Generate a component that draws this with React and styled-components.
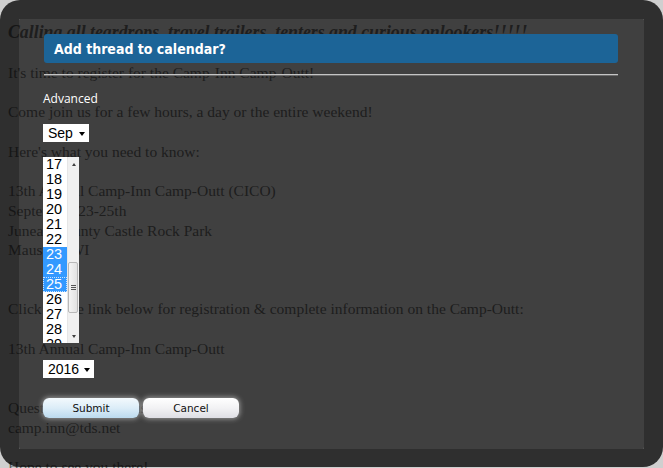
import React from "react";
import styled, { createGlobalStyle, css } from "styled-components";

const Global = createGlobalStyle`
  html, body { margin: 0; padding: 0; }
  body { background: #cfcfcf; overflow: hidden; }
`;

const Page = styled.div`
  position: relative;
  width: 663px;
  height: 468px;
  overflow: hidden;
`;

const Article = styled.div`
  padding: 23px 8px 0;
  font-family: "Liberation Serif", "DejaVu Serif", serif;
  font-size: 15.5px;
  line-height: 19.6px;
  color: #626262;
`;

const Para = styled.p`
  margin: 0 0 20px;
  white-space: nowrap;
  ${(p) =>
    p.$lead &&
    css`
      font-weight: bold;
      font-style: italic;
      font-size: 17.8px;
    `}
`;

const Frame = styled.div`
  position: absolute;
  left: 0;
  top: 0;
  width: 663px;
  height: 467px;
  box-sizing: border-box;
  border: 19px solid rgba(0, 0, 0, 0.773);
  border-bottom-width: 18px;
  border-radius: 20px;
  background: rgba(0, 0, 0, 0.691);
  background-clip: padding-box;
`;

const Dialog = styled.div`
  display: flex;
  flex-direction: column;
  align-items: flex-start;
  padding: 15px 26px 0 24px;
  font-family: "Liberation Sans", Arial, sans-serif;
`;

const TitleBar = styled.div`
  align-self: stretch;
  margin-left: 1px;
  height: 29px;
  display: flex;
  align-items: center;
  padding-left: 10px;
  background: #1c6497;
  border-radius: 3px;
  color: #fff;
  font-family: "DejaVu Sans Condensed", "DejaVu Sans", Verdana, sans-serif;
  font-weight: bold;
  font-size: 14px;
`;

const Rule = styled.div`
  align-self: stretch;
  margin: 11px 0 0 1px;
  height: 1px;
  background: #c4c4c4;
  border-bottom: 1px solid #6c6c6c;
`;

const Label = styled.div`
  margin-top: 15px;
  color: #fff;
  font-family: "Open Sans", "Noto Sans", sans-serif;
  font-size: 12px;
  line-height: 16px;
`;

const Select = styled.div`
  margin-top: ${(p) => p.$mt}px;
  width: ${(p) => p.$w}px;
  height: 18px;
  box-sizing: border-box;
  background: #fff;
  display: flex;
  align-items: center;
  justify-content: space-between;
  padding: 0 4px 0 5px;
  font-size: 14px;
  color: #000;
`;

const Caret = styled.span`
  width: 0;
  height: 0;
  border-left: 3.5px solid transparent;
  border-right: 3.5px solid transparent;
  border-top: 4px solid #000;
  margin-top: 1px;
`;

const ListBox = styled.div`
  margin-top: 15px;
  width: 36px;
  height: 186px;
  background: #fff;
  display: flex;
  overflow: hidden;
`;

const Options = styled.div`
  flex: 1;
  display: flex;
  flex-direction: column;
`;

const Option = styled.div`
  flex: none;
  height: 15px;
  line-height: 15px;
  padding-left: 3px;
  font-size: 14.5px;
  color: #000;
  box-sizing: border-box;
  ${(p) =>
    p.$sel &&
    css`
      background: #3399ff;
      color: #fff;
    `}
  ${(p) =>
    p.$focus &&
    css`
      outline: 1px dotted #c8e2ff;
      outline-offset: -1px;
    `}
`;

const ScrollBar = styled.div`
  position: relative;
  width: 12px;
  background: #f0f0f0;
  border-left: 1px solid #e6e6e6;
  display: flex;
  flex-direction: column;
  align-items: center;
  justify-content: space-between;
  padding: 6px 0 5px;
  box-sizing: border-box;
`;

const Arrow = styled.span`
  width: 0;
  height: 0;
  border-left: 2.5px solid transparent;
  border-right: 2.5px solid transparent;
  ${(p) =>
    p.$up
      ? css`
          border-bottom: 3px solid #404040;
        `
      : css`
          border-top: 3px solid #404040;
        `}
`;

const Thumb = styled.div`
  position: absolute;
  left: 0;
  top: 105px;
  width: 10px;
  height: 51px;
  box-sizing: border-box;
  border: 1px solid #b8b8b8;
  border-radius: 2px;
  background: linear-gradient(to right, #f4f4f4, #e2e2e2);
  display: flex;
  align-items: center;
  justify-content: center;
`;

const Grip = styled.span`
  width: 5px;
  height: 5px;
  background: repeating-linear-gradient(
    to bottom,
    #555 0 1px,
    transparent 1px 2px
  );
`;

const Buttons = styled.div`
  margin-top: 20px;
  display: flex;
  gap: 4px;
`;

const Button = styled.button`
  width: 96px;
  height: 20px;
  padding: 0;
  border: none;
  border-radius: 6px;
  font-family: "DejaVu Sans", Tahoma, sans-serif;
  font-size: 10.5px;
  color: #111;
  box-shadow: 0 0 5px 1px rgba(255, 255, 255, 0.45);
  background: ${(p) =>
    p.$primary
      ? "linear-gradient(to bottom, #f3f9fd 0%, #dcedf8 50%, #bcdaee 100%)"
      : "linear-gradient(to bottom, #ffffff 0%, #f2f2f4 50%, #dedee4 100%)"};
`;

const days = Array.from({ length: 13 }, (_, i) => 17 + i);

export default function App() {
  return (
    <>
      <Global />
      <Page>
        <Article>
          <Para $lead>
            Calling all teardrops, travel trailers, tenters and curious onlookers!!!!!
          </Para>
          <Para>It's time to register for the Camp-Inn Camp-Outt!</Para>
          <Para>Come join us for a few hours, a day or the entire weekend!</Para>
          <Para>Here's what you need to know:</Para>
          <Para>
            13th Annual Camp-Inn Camp-Outt (CICO)
            <br />
            September 23-25th
            <br />
            Juneau County Castle Rock Park
            <br />
            Mauston, WI
            <br />
            <br />
          </Para>
          <Para>
            Click on the link below for registration &amp; complete information on the Camp-Outt:
          </Para>
          <Para>
            13th Annual Camp-Inn Camp-Outt
            <br />
            <br />
          </Para>
          <Para>
            Questions? Contact us at
            <br />
            camp.inn@tds.net
          </Para>
          <Para>Hope to see you there!</Para>
        </Article>
        <Frame>
          <Dialog>
            <TitleBar>Add thread to calendar?</TitleBar>
            <Rule />
            <Label>Advanced</Label>
            <Select $mt={17} $w={46}>
              Sep <Caret />
            </Select>
            <ListBox>
              <Options>
                {days.map((d) => (
                  <Option key={d} $sel={d >= 23 && d <= 25} $focus={d === 25}>
                    {d}
                  </Option>
                ))}
              </Options>
              <ScrollBar>
                <Arrow $up />
                <Thumb>
                  <Grip />
                </Thumb>
                <Arrow />
              </ScrollBar>
            </ListBox>
            <Select $mt={17} $w={51}>
              2016 <Caret />
            </Select>
            <Buttons>
              <Button $primary>Submit</Button>
              <Button>Cancel</Button>
            </Buttons>
          </Dialog>
        </Frame>
      </Page>
    </>
  );
}
